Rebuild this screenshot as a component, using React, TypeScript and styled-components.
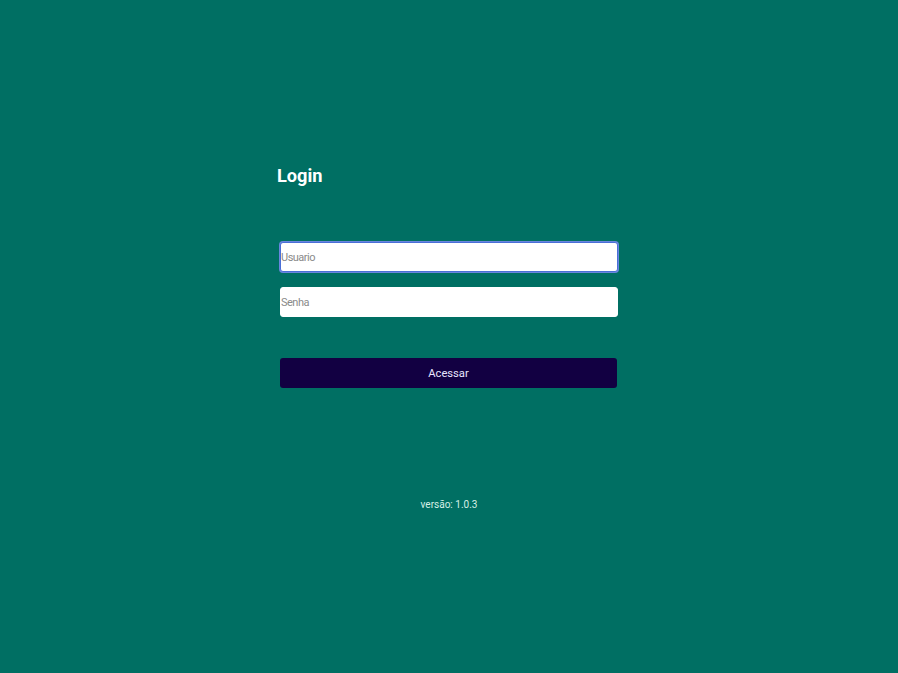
import React from "react";
import styled, { createGlobalStyle } from "styled-components";

const Global = createGlobalStyle`
  html, body { margin: 0; padding: 0; background: #006f63; }
  body { font-family: Roboto, "Noto Sans", sans-serif; }
  * { box-sizing: border-box; }
`;

const Page = styled.div`
  width: 898px;
  height: 673px;
  background: #006f63;
  display: flex;
  flex-direction: column;
  align-items: center;
  padding-top: 164px;
`;

const Card = styled.div`
  width: 344px;
  display: flex;
  flex-direction: column;
`;

const Title = styled.h2`
  margin: 0;
  font-size: 18.2px;
  font-weight: 700;
  color: #ffffff;
  line-height: 23px;
`;

const Form = styled.form`
  display: flex;
  flex-direction: column;
  padding: 0 3px;
  margin-top: 55px;
`;

const Input = styled.input<{ $focused?: boolean }>`
  width: 338px;
  height: 30px;
  border: 1px solid ${(p) => (p.$focused ? "#4a6fd6" : "#ffffff")};
  box-shadow: ${(p) => (p.$focused ? "0 0 0 1px #6a86de" : "none")};
  border-radius: 3px;
  background: #ffffff;
  padding: 0;
  font-family: Roboto, sans-serif;
  font-size: 11px;
  letter-spacing: -0.5px;
  color: #333;
  outline: none;
  margin-bottom: ${(p) => (p.$focused ? "15px" : "0")};
  &::placeholder { color: #8a8a8a; }
`;

const Button = styled.button`
  margin-top: 41px;
  width: 337px;
  height: 30px;
  border: none;
  border-radius: 3px;
  background: #120042;
  color: #e8e4ff;
  font-family: Roboto, sans-serif;
  font-size: 11.2px;
  cursor: pointer;
`;

const Version = styled.div`
  margin-top: 111px;
  font-size: 10px;
  color: #d6efe6;
  text-align: center;
`;

export default function App() {
  return (
    <>
      <Global />
      <Page>
        <Card>
          <Title>Login</Title>
          <Form onSubmit={(e) => e.preventDefault()}>
            <Input $focused placeholder="Usuario" />
            <Input type="password" placeholder="Senha" />
            <Button type="submit">Acessar</Button>
          </Form>
          <Version>versão: 1.0.3</Version>
        </Card>
      </Page>
    </>
  );
}
